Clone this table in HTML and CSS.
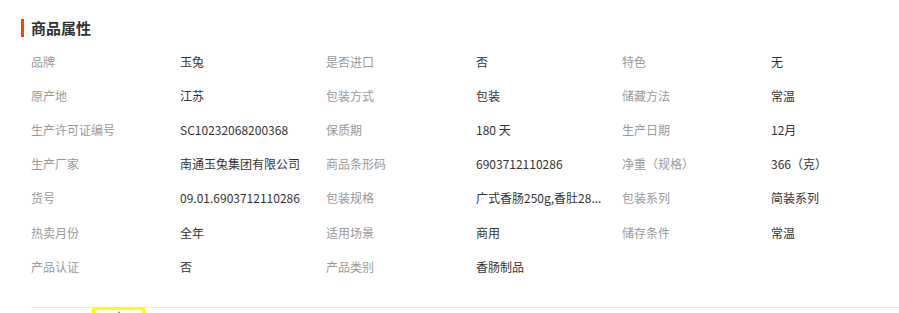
FILE: index.html
```html
<!DOCTYPE html>
<html lang="zh-CN">
<head>
<meta charset="utf-8">
<title>商品属性</title>
<link rel="stylesheet" href="styles.css">
</head>
<body>
<section class="attrs">
  <h2 class="attrs-title">商品属性</h2>
  <div class="attrs-grid">
    <span class="k">品牌</span><span class="v">玉兔</span>
    <span class="k">是否进口</span><span class="v">否</span>
    <span class="k">特色</span><span class="v">无</span>

    <span class="k">原产地</span><span class="v">江苏</span>
    <span class="k">包装方式</span><span class="v">包装</span>
    <span class="k">储藏方法</span><span class="v">常温</span>

    <span class="k">生产许可证编号</span><span class="v">SC10232068200368</span>
    <span class="k">保质期</span><span class="v">180 天</span>
    <span class="k">生产日期</span><span class="v">12月</span>

    <span class="k">生产厂家</span><span class="v">南通玉兔集团有限公司</span>
    <span class="k">商品条形码</span><span class="v">6903712110286</span>
    <span class="k">净重（规格）</span><span class="v">366（克）</span>

    <span class="k">货号</span><span class="v">09.01.6903712110286</span>
    <span class="k">包装规格</span><span class="v">广式香肠250g,香肚28...</span>
    <span class="k">包装系列</span><span class="v">简装系列</span>

    <span class="k">热卖月份</span><span class="v">全年</span>
    <span class="k">适用场景</span><span class="v">商用</span>
    <span class="k">储存条件</span><span class="v">常温</span>

    <span class="k">产品认证</span><span class="v">否</span>
    <span class="k">产品类别</span><span class="v">香肠制品</span>
  </div>
  <div class="attrs-foot">
    <div class="fold-tab"><span class="caret"></span></div>
  </div>
</section>
</body>
</html>
```

FILE: styles.css
```css
html, body {
  margin: 0;
  padding: 0;
  background: #fff;
}
body {
  font-family: "Noto Sans CJK SC", "Liberation Sans", sans-serif;
  font-size: 12px;
  color: #333;
}
.attrs {
  padding: 19px 0 0 21px;
}
.attrs-title {
  margin: 0;
  height: 18px;
  line-height: 18px;
  font-size: 15px;
  font-weight: bold;
  color: #333;
  padding-left: 7px;
  border-left: 3px solid #ff4400;
}
.attrs-grid {
  margin: 7px 0 0 10px;
  display: grid;
  grid-template-columns: 149px 146px 150px 146px 149px 1fr;
  grid-auto-rows: 34.2px;
  align-items: center;
}
.k {
  color: #999;
  white-space: nowrap;
}
.v {
  color: #333;
  white-space: nowrap;
}
.attrs-foot {
  margin: 24px 0 0 10px;
  border-top: 1px solid #e5e5e5;
  height: 6px;
  position: relative;
}
.fold-tab {
  position: absolute;
  left: 61px;
  top: -1px;
  width: 47px;
  height: 10px;
  border: 3px solid #ffff00;
  border-bottom: none;
  display: flex;
  justify-content: center;
  padding-top: 1px;
}
.caret {
  width: 0;
  height: 0;
  border-left: 2px solid transparent;
  border-right: 2px solid transparent;
  border-bottom: 3px solid #8a94a8;
}
```
